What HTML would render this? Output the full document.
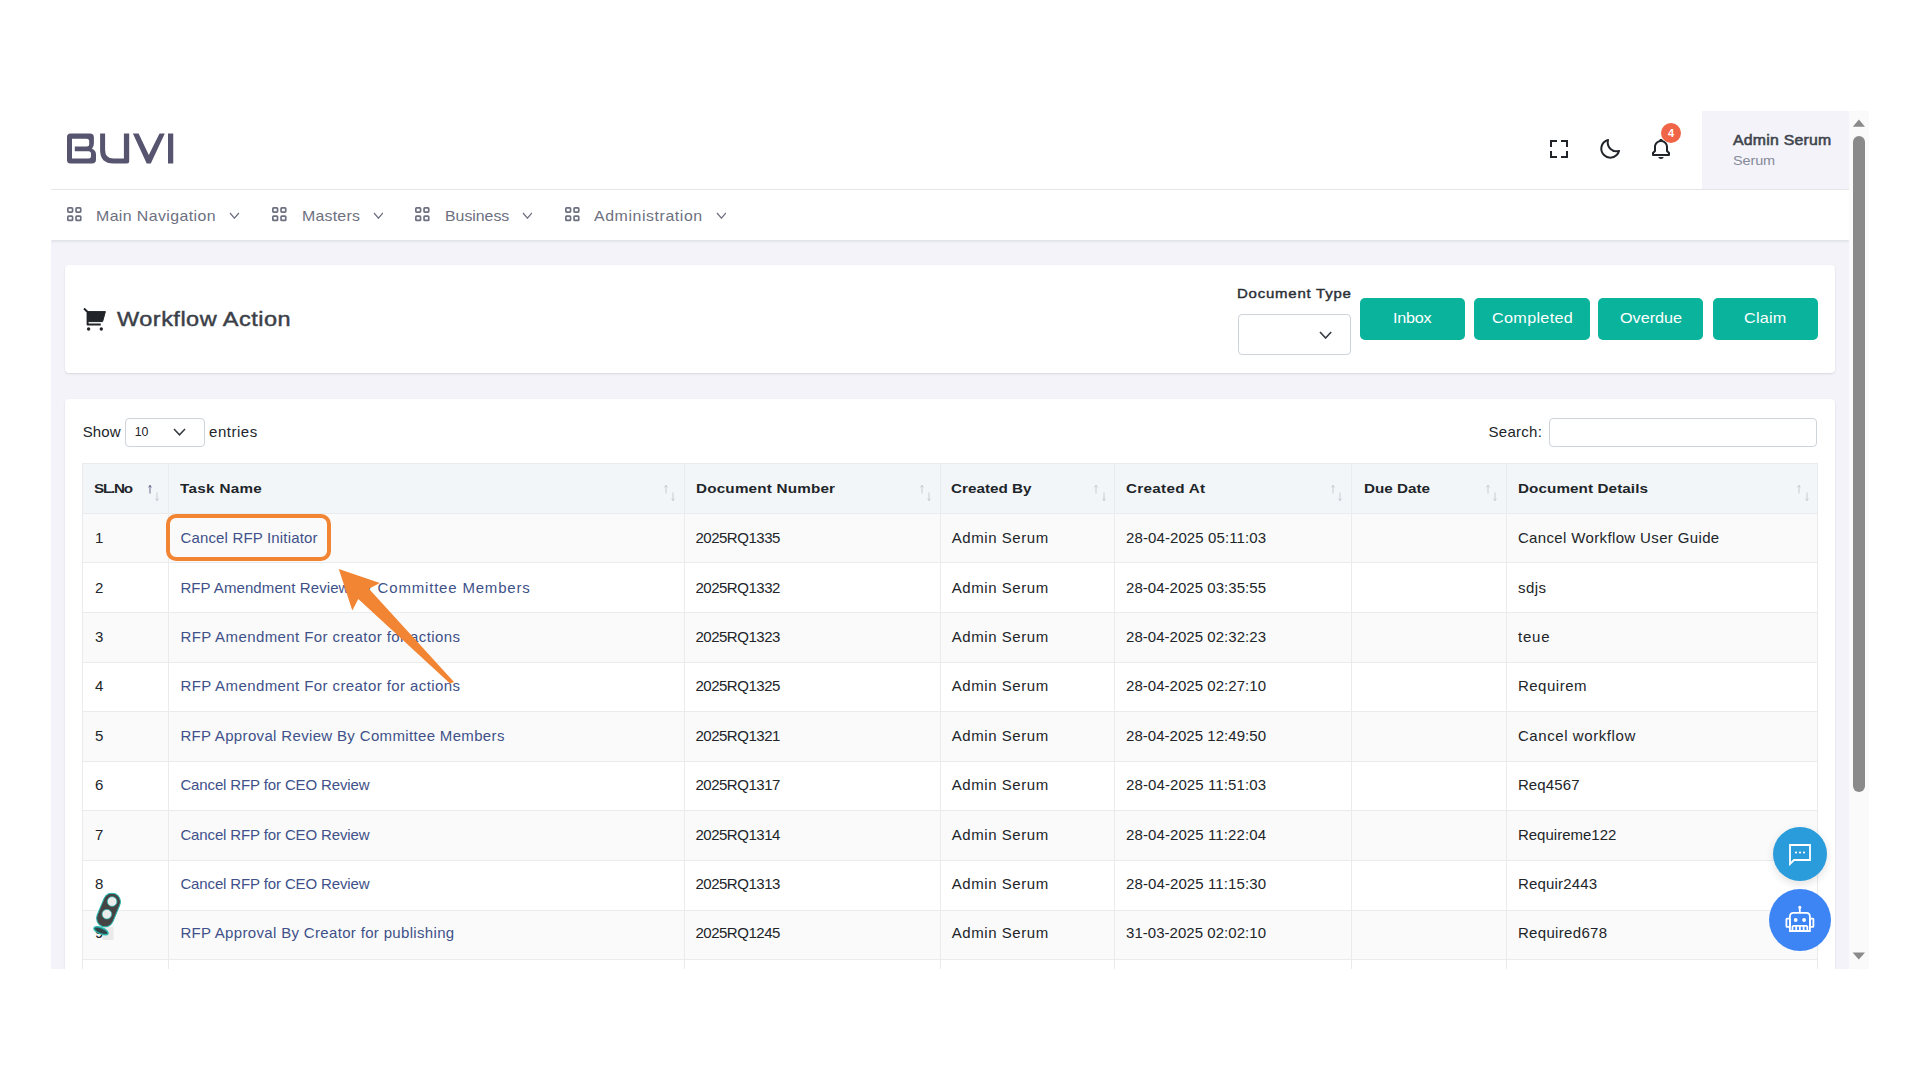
<!DOCTYPE html><html><head><meta charset="utf-8"><style>
*{box-sizing:border-box;margin:0;padding:0}
html,body{width:1920px;height:1080px;overflow:hidden;background:#fff;font-family:"Liberation Sans",sans-serif;color:#212529}
.a{position:absolute}
#frame{position:absolute;left:51px;top:111px;width:1798px;height:858px;overflow:hidden;background:#f3f3f9}
#in{position:absolute;left:-51px;top:-111px;width:1920px;height:1080px}
.t{position:absolute;white-space:nowrap;line-height:1}
.card{position:absolute;background:#fff;border-radius:4px;box-shadow:0 1px 2px rgba(56,65,74,.15)}
.btn{position:absolute;background:#0ab39c;border-radius:5px}
.hl{position:absolute;background:#e9ebec}
</style></head><body>
<div id="frame"><div id="in">
<div class="a" style="left:51px;top:111px;width:1798px;height:78px;background:#fff;"></div>
<div class="a" style="left:51px;top:189px;width:1798px;height:1px;background:#e9ebec;"></div>
<div class="a" style="left:1702px;top:111px;width:147px;height:78px;background:#f3f3f9;"></div>
<div class="a" style="left:51px;top:190px;width:1798px;height:50px;background:#fff;box-shadow:0 1px 3px rgba(15,34,58,.12)"></div>
<div class="card" style="left:65px;top:265px;width:1770px;height:108px"></div>
<div class="card" style="left:65px;top:399px;width:1770px;height:700px"></div>
<svg class="a" style="left:62px;top:126px" width="120" height="44" viewBox="0 0 120 44"><g fill="#57546f" fill-rule="evenodd"><path d="M8.5 7.5 H27.9 Q31.9 7.5 31.9 11.5 V17.5 Q31.9 20.5 30 22.8 Q34 24.5 34 28.5 V33.5 Q34 37.5 30 37.5 H8.5 Q5 37.5 5 34 V11 Q5 7.5 8.5 7.5 Z M10 12.8 H24.7 Q27.2 12.8 27.2 15.3 V18.1 Q27.2 20.6 24.7 20.6 H12.8 V25.3 H26.5 Q29 25.3 29 27.8 V30 Q29 32.5 26.5 32.5 H10 Z"/><path d="M38.1 7.5 H43.1 V24 Q43.1 32.5 51.5 32.5 H61.9 V7.5 H67.2 V35 Q67.2 37.5 64.7 37.5 H51.5 Q38.1 37.5 38.1 24 Z"/><polygon points="70.9,7.5 76.6,7.5 86.8,29 97.5,7.5 102.8,7.5 88.8,37.5 84.7,37.5"/><rect x="106" y="7.5" width="5.25" height="30"/></g></svg>
<svg class="a" style="left:1547px;top:136.6px" width="24" height="24" viewBox="0 0 24 24"><path fill="#212529" d="M5 5h5V3H3v7h2zm5 14H5v-5H3v7h7zm11-5h-2v5h-5v2h7zm-2-4h2V3h-7v2h5z"/></svg>
<svg class="a" style="left:1598px;top:137px" width="24" height="24" viewBox="0 0 24 24"><path fill="#212529" d="M20.742 13.045a8.088 8.088 0 0 1-2.077.271c-2.135 0-4.14-.83-5.646-2.336a8.025 8.025 0 0 1-2.064-7.723A1 1 0 0 0 9.73 2.034a10.014 10.014 0 0 0-4.489 2.582c-3.898 3.898-3.898 10.243 0 14.143a9.937 9.937 0 0 0 7.072 2.93 9.93 9.93 0 0 0 7.07-2.929 10.007 10.007 0 0 0 2.583-4.491 1.001 1.001 0 0 0-1.224-1.224zm-2.772 4.301a7.947 7.947 0 0 1-5.656 2.343 7.953 7.953 0 0 1-5.658-2.344c-3.118-3.119-3.118-8.195 0-11.314a7.923 7.923 0 0 1 2.06-1.483 10.027 10.027 0 0 0 2.89 7.848 9.972 9.972 0 0 0 7.848 2.891 8.036 8.036 0 0 1-1.484 2.059z"/></svg>
<svg class="a" style="left:1648.7px;top:137.2px" width="24" height="24" viewBox="0 0 24 24"><path fill="#212529" d="M19 13.586V10c0-3.217-2.185-5.927-5.145-6.742C13.562 2.52 12.846 2 12 2s-1.562.52-1.855 1.258C7.185 4.074 5 6.783 5 10v3.586l-1.707 1.707A.996.996 0 0 0 3 16v2a1 1 0 0 0 1 1h16a1 1 0 0 0 1-1v-2a.996.996 0 0 0-.293-.707L19 13.586zM19 17H5v-.586l1.707-1.707A.996.996 0 0 0 7 14v-4c0-2.757 2.243-5 5-5s5 2.243 5 5v4c0 .266.105.52.293.707L19 16.414V17zm-7 5a2.98 2.98 0 0 0 2.818-2H9.182A2.98 2.98 0 0 0 12 22z"/></svg>
<div class="a" style="left:1661px;top:122.5px;width:20px;height:20px;border-radius:50%;background:#f06548"></div>
<div class="t" style="left:1668.00px;top:128.19px;font-size:11px;color:#fff;font-weight:bold;letter-spacing:0.000px;">4</div>
<div class="t" style="left:1733.00px;top:133.11px;font-size:14.4px;color:#3f444d;font-weight:normal;letter-spacing:0.219px;transform:scaleX(1.1);transform-origin:0 0;-webkit-text-stroke:0.55px #3f444d">Admin Serum</div>
<div class="t" style="left:1733.00px;top:154.93px;font-size:12.6px;color:#878a99;font-weight:normal;letter-spacing:-0.103px;transform:scaleX(1.15);transform-origin:0 0;">Serum</div>
<svg class="a" style="left:66.7px;top:206.5px" width="16" height="15" viewBox="0 0 16 15"><g fill="none" stroke="#6d7080" stroke-width="1.7"><rect x="0.85" y="0.85" width="4.7" height="4.3" rx="0.8"/><rect x="9.05" y="0.85" width="4.7" height="4.3" rx="0.8"/><rect x="0.85" y="9.15" width="4.7" height="4.3" rx="0.8"/><rect x="9.05" y="9.15" width="4.7" height="4.3" rx="0.8"/></g></svg>
<div class="t" style="left:96.30px;top:208.30px;font-size:15px;color:#6d7080;font-weight:normal;letter-spacing:0.370px;transform:scaleX(1.06);transform-origin:0 0;">Main Navigation</div>
<svg class="a" style="left:229.0px;top:211.8px" width="10.9" height="7.2" viewBox="0 0 10.9 7.2"><path d="M1 1 L5.45 6.2 L9.9 1" fill="none" stroke="#6d7080" stroke-width="1.25"/></svg>
<svg class="a" style="left:271.6px;top:206.5px" width="16" height="15" viewBox="0 0 16 15"><g fill="none" stroke="#6d7080" stroke-width="1.7"><rect x="0.85" y="0.85" width="4.7" height="4.3" rx="0.8"/><rect x="9.05" y="0.85" width="4.7" height="4.3" rx="0.8"/><rect x="0.85" y="9.15" width="4.7" height="4.3" rx="0.8"/><rect x="9.05" y="9.15" width="4.7" height="4.3" rx="0.8"/></g></svg>
<div class="t" style="left:301.70px;top:208.30px;font-size:15px;color:#6d7080;font-weight:normal;letter-spacing:0.216px;transform:scaleX(1.06);transform-origin:0 0;">Masters</div>
<svg class="a" style="left:372.5px;top:211.8px" width="10.9" height="7.2" viewBox="0 0 10.9 7.2"><path d="M1 1 L5.45 6.2 L9.9 1" fill="none" stroke="#6d7080" stroke-width="1.25"/></svg>
<svg class="a" style="left:415px;top:206.5px" width="16" height="15" viewBox="0 0 16 15"><g fill="none" stroke="#6d7080" stroke-width="1.7"><rect x="0.85" y="0.85" width="4.7" height="4.3" rx="0.8"/><rect x="9.05" y="0.85" width="4.7" height="4.3" rx="0.8"/><rect x="0.85" y="9.15" width="4.7" height="4.3" rx="0.8"/><rect x="9.05" y="9.15" width="4.7" height="4.3" rx="0.8"/></g></svg>
<div class="t" style="left:445.00px;top:208.30px;font-size:15px;color:#6d7080;font-weight:normal;letter-spacing:-0.034px;transform:scaleX(1.06);transform-origin:0 0;">Business</div>
<svg class="a" style="left:521.5px;top:211.8px" width="10.9" height="7.2" viewBox="0 0 10.9 7.2"><path d="M1 1 L5.45 6.2 L9.9 1" fill="none" stroke="#6d7080" stroke-width="1.25"/></svg>
<svg class="a" style="left:564.5px;top:206.5px" width="16" height="15" viewBox="0 0 16 15"><g fill="none" stroke="#6d7080" stroke-width="1.7"><rect x="0.85" y="0.85" width="4.7" height="4.3" rx="0.8"/><rect x="9.05" y="0.85" width="4.7" height="4.3" rx="0.8"/><rect x="0.85" y="9.15" width="4.7" height="4.3" rx="0.8"/><rect x="9.05" y="9.15" width="4.7" height="4.3" rx="0.8"/></g></svg>
<div class="t" style="left:594.30px;top:208.30px;font-size:15px;color:#6d7080;font-weight:normal;letter-spacing:0.542px;transform:scaleX(1.06);transform-origin:0 0;">Administration</div>
<svg class="a" style="left:715.5px;top:211.8px" width="10.9" height="7.2" viewBox="0 0 10.9 7.2"><path d="M1 1 L5.45 6.2 L9.9 1" fill="none" stroke="#6d7080" stroke-width="1.25"/></svg>
<svg class="a" style="left:80px;top:305px" width="30" height="28" viewBox="80 305 30 28"><g fill="#212529" stroke="#212529" stroke-linejoin="round"><path d="M84 308.6 L87.6 312 L87.6 324.6 L100.8 324.6" fill="none" stroke-width="2"/><polygon points="87.6,311.6 105.4,311.6 102.6,321.6 88.5,321.6" stroke-width="1"/><circle cx="88.6" cy="329" r="1.7" stroke="none"/><circle cx="101.3" cy="329" r="1.7" stroke="none"/></g></svg>
<div class="t" style="left:117.20px;top:307.92px;font-size:21px;color:#3b4048;font-weight:normal;letter-spacing:0.429px;transform:scaleX(1.12);transform-origin:0 0;-webkit-text-stroke:0.45px #3b4048">Workflow Action</div>
<div class="t" style="left:1237.20px;top:286.66px;font-size:13.4px;color:#2b2f36;font-weight:normal;letter-spacing:0.682px;transform:scaleX(1.12);transform-origin:0 0;-webkit-text-stroke:0.4px #2b2f36">Document Type</div>
<div class="a" style="left:1237.5px;top:313.5px;width:113px;height:41px;border:1px solid #ced4da;border-radius:4px;background:#fff"></div>
<svg class="a" style="left:1318.7px;top:330.5px" width="13.2" height="8" viewBox="0 0 13.2 8"><path d="M1 1 L6.6 7 L12.2 1" fill="none" stroke="#343a40" stroke-width="1.6"/></svg>
<div class="btn" style="left:1360.2px;top:298.2px;width:105.2px;height:41.4px"></div>
<div class="t" style="left:1393.40px;top:310.30px;font-size:15px;color:#fff;font-weight:normal;letter-spacing:-0.234px;transform:scaleX(1.08);transform-origin:0 0;">Inbox</div>
<div class="btn" style="left:1474px;top:298.2px;width:115.5px;height:41.4px"></div>
<div class="t" style="left:1491.50px;top:310.30px;font-size:15px;color:#fff;font-weight:normal;letter-spacing:0.286px;transform:scaleX(1.08);transform-origin:0 0;">Completed</div>
<div class="btn" style="left:1598px;top:298.2px;width:105.3px;height:41.4px"></div>
<div class="t" style="left:1620.00px;top:310.30px;font-size:15px;color:#fff;font-weight:normal;letter-spacing:-0.020px;transform:scaleX(1.08);transform-origin:0 0;">Overdue</div>
<div class="btn" style="left:1713.2px;top:298.2px;width:104.9px;height:41.4px"></div>
<div class="t" style="left:1744.20px;top:310.30px;font-size:15px;color:#fff;font-weight:normal;letter-spacing:0.210px;transform:scaleX(1.08);transform-origin:0 0;">Claim</div>
<div class="t" style="left:82.70px;top:423.90px;font-size:15px;color:#212529;font-weight:normal;letter-spacing:0.142px;">Show</div>
<div class="a" style="left:125.4px;top:417.5px;width:79.2px;height:29.5px;border:1px solid #ced4da;border-radius:4px;background:#fff"></div>
<div class="t" style="left:134.80px;top:426.10px;font-size:12.4px;color:#212529;font-weight:normal;letter-spacing:-0.300px;">10</div>
<svg class="a" style="left:172.8px;top:428.4px" width="13" height="7.8" viewBox="0 0 13 7.8"><path d="M1 1 L6.5 6.8 L12 1" fill="none" stroke="#343a40" stroke-width="1.5"/></svg>
<div class="t" style="left:209.00px;top:423.90px;font-size:15px;color:#212529;font-weight:normal;letter-spacing:0.533px;">entries</div>
<div class="t" style="left:1488.60px;top:424.20px;font-size:15px;color:#212529;font-weight:normal;letter-spacing:0.254px;">Search:</div>
<div class="a" style="left:1549px;top:417.5px;width:268.3px;height:29.5px;border:1px solid #ced4da;border-radius:4px;background:#fff"></div>
<div class="a" style="left:82.2px;top:463.3px;width:1735.3999999999999px;height:49.99999999999994px;background:#f3f6f9;"></div>
<div class="a" style="left:82.2px;top:513.3px;width:1735.3999999999999px;height:49.60000000000002px;background:#fafafa;"></div>
<div class="a" style="left:82.2px;top:562.9px;width:1735.3999999999999px;height:49.60000000000002px;background:#ffffff;"></div>
<div class="a" style="left:82.2px;top:612.5px;width:1735.3999999999999px;height:49.60000000000002px;background:#fafafa;"></div>
<div class="a" style="left:82.2px;top:662.0999999999999px;width:1735.3999999999999px;height:49.60000000000002px;background:#ffffff;"></div>
<div class="a" style="left:82.2px;top:711.6999999999999px;width:1735.3999999999999px;height:49.60000000000002px;background:#fafafa;"></div>
<div class="a" style="left:82.2px;top:761.3px;width:1735.3999999999999px;height:49.60000000000002px;background:#ffffff;"></div>
<div class="a" style="left:82.2px;top:810.9px;width:1735.3999999999999px;height:49.60000000000002px;background:#fafafa;"></div>
<div class="a" style="left:82.2px;top:860.5px;width:1735.3999999999999px;height:49.60000000000002px;background:#ffffff;"></div>
<div class="a" style="left:82.2px;top:910.0999999999999px;width:1735.3999999999999px;height:49.60000000000002px;background:#fafafa;"></div>
<div class="a" style="left:82.2px;top:959.7px;width:1735.3999999999999px;height:49.60000000000002px;background:#ffffff;"></div>
<div class="hl" style="left:82.2px;top:463.3px;width:1735.4px;height:1px"></div>
<div class="hl" style="left:82.2px;top:512.8px;width:1735.4px;height:1px"></div>
<div class="hl" style="left:82.2px;top:562.4px;width:1735.4px;height:1px"></div>
<div class="hl" style="left:82.2px;top:612.0px;width:1735.4px;height:1px"></div>
<div class="hl" style="left:82.2px;top:661.6px;width:1735.4px;height:1px"></div>
<div class="hl" style="left:82.2px;top:711.2px;width:1735.4px;height:1px"></div>
<div class="hl" style="left:82.2px;top:760.8px;width:1735.4px;height:1px"></div>
<div class="hl" style="left:82.2px;top:810.4px;width:1735.4px;height:1px"></div>
<div class="hl" style="left:82.2px;top:860.0px;width:1735.4px;height:1px"></div>
<div class="hl" style="left:82.2px;top:909.6px;width:1735.4px;height:1px"></div>
<div class="hl" style="left:82.2px;top:959.2px;width:1735.4px;height:1px"></div>
<div class="hl" style="left:82.2px;top:1008.8px;width:1735.4px;height:1px"></div>
<div class="hl" style="left:81.7px;top:463.3px;width:1px;height:600px"></div>
<div class="hl" style="left:167.6px;top:463.3px;width:1px;height:600px"></div>
<div class="hl" style="left:683.9px;top:463.3px;width:1px;height:600px"></div>
<div class="hl" style="left:939.9px;top:463.3px;width:1px;height:600px"></div>
<div class="hl" style="left:1114.2px;top:463.3px;width:1px;height:600px"></div>
<div class="hl" style="left:1351.0px;top:463.3px;width:1px;height:600px"></div>
<div class="hl" style="left:1505.9px;top:463.3px;width:1px;height:600px"></div>
<div class="hl" style="left:1817.1px;top:463.3px;width:1px;height:600px"></div>
<div class="t" style="left:94.40px;top:481.99px;font-size:13.6px;color:#212529;font-weight:bold;letter-spacing:-1.121px;transform:scaleX(1.12);transform-origin:0 0;">SL.No</div>
<div class="t" style="left:180.30px;top:481.99px;font-size:13.6px;color:#212529;font-weight:bold;letter-spacing:0.281px;transform:scaleX(1.12);transform-origin:0 0;">Task Name</div>
<div class="t" style="left:695.70px;top:481.99px;font-size:13.6px;color:#212529;font-weight:bold;letter-spacing:0.182px;transform:scaleX(1.12);transform-origin:0 0;">Document Number</div>
<div class="t" style="left:951.25px;top:481.99px;font-size:13.6px;color:#212529;font-weight:bold;letter-spacing:0.007px;transform:scaleX(1.12);transform-origin:0 0;">Created By</div>
<div class="t" style="left:1126.00px;top:481.99px;font-size:13.6px;color:#212529;font-weight:bold;letter-spacing:0.271px;transform:scaleX(1.12);transform-origin:0 0;">Created At</div>
<div class="t" style="left:1363.60px;top:481.99px;font-size:13.6px;color:#212529;font-weight:bold;letter-spacing:0.009px;transform:scaleX(1.12);transform-origin:0 0;">Due Date</div>
<div class="t" style="left:1518.00px;top:481.99px;font-size:13.6px;color:#212529;font-weight:bold;letter-spacing:0.081px;transform:scaleX(1.12);transform-origin:0 0;">Document Details</div>
<svg class="a" style="left:146.8px;top:484px" width="6" height="10" viewBox="0 0 6 10"><path d="M3 9.5 V1.8 M1.7 3.4 L3 1.2 L4.3 3.4" fill="none" stroke="#5a5f80" stroke-width="0.9"/></svg>
<svg class="a" style="left:154.0px;top:491.5px" width="6" height="10" viewBox="0 0 6 10"><path d="M3 0.5 V8.2 M1.7 6.6 L3 8.8 L4.3 6.6" fill="none" stroke="#c4c7cc" stroke-width="0.9"/></svg>
<svg class="a" style="left:663.1px;top:484px" width="6" height="10" viewBox="0 0 6 10"><path d="M3 9.5 V1.8 M1.7 3.4 L3 1.2 L4.3 3.4" fill="none" stroke="#c4c7cc" stroke-width="0.9"/></svg>
<svg class="a" style="left:670.3px;top:491.5px" width="6" height="10" viewBox="0 0 6 10"><path d="M3 0.5 V8.2 M1.7 6.6 L3 8.8 L4.3 6.6" fill="none" stroke="#c4c7cc" stroke-width="0.9"/></svg>
<svg class="a" style="left:919.1px;top:484px" width="6" height="10" viewBox="0 0 6 10"><path d="M3 9.5 V1.8 M1.7 3.4 L3 1.2 L4.3 3.4" fill="none" stroke="#c4c7cc" stroke-width="0.9"/></svg>
<svg class="a" style="left:926.3px;top:491.5px" width="6" height="10" viewBox="0 0 6 10"><path d="M3 0.5 V8.2 M1.7 6.6 L3 8.8 L4.3 6.6" fill="none" stroke="#c4c7cc" stroke-width="0.9"/></svg>
<svg class="a" style="left:1093.4px;top:484px" width="6" height="10" viewBox="0 0 6 10"><path d="M3 9.5 V1.8 M1.7 3.4 L3 1.2 L4.3 3.4" fill="none" stroke="#c4c7cc" stroke-width="0.9"/></svg>
<svg class="a" style="left:1100.6px;top:491.5px" width="6" height="10" viewBox="0 0 6 10"><path d="M3 0.5 V8.2 M1.7 6.6 L3 8.8 L4.3 6.6" fill="none" stroke="#c4c7cc" stroke-width="0.9"/></svg>
<svg class="a" style="left:1330.2px;top:484px" width="6" height="10" viewBox="0 0 6 10"><path d="M3 9.5 V1.8 M1.7 3.4 L3 1.2 L4.3 3.4" fill="none" stroke="#c4c7cc" stroke-width="0.9"/></svg>
<svg class="a" style="left:1337.4px;top:491.5px" width="6" height="10" viewBox="0 0 6 10"><path d="M3 0.5 V8.2 M1.7 6.6 L3 8.8 L4.3 6.6" fill="none" stroke="#c4c7cc" stroke-width="0.9"/></svg>
<svg class="a" style="left:1485.1px;top:484px" width="6" height="10" viewBox="0 0 6 10"><path d="M3 9.5 V1.8 M1.7 3.4 L3 1.2 L4.3 3.4" fill="none" stroke="#c4c7cc" stroke-width="0.9"/></svg>
<svg class="a" style="left:1492.3px;top:491.5px" width="6" height="10" viewBox="0 0 6 10"><path d="M3 0.5 V8.2 M1.7 6.6 L3 8.8 L4.3 6.6" fill="none" stroke="#c4c7cc" stroke-width="0.9"/></svg>
<svg class="a" style="left:1796.3px;top:484px" width="6" height="10" viewBox="0 0 6 10"><path d="M3 9.5 V1.8 M1.7 3.4 L3 1.2 L4.3 3.4" fill="none" stroke="#c4c7cc" stroke-width="0.9"/></svg>
<svg class="a" style="left:1803.5px;top:491.5px" width="6" height="10" viewBox="0 0 6 10"><path d="M3 0.5 V8.2 M1.7 6.6 L3 8.8 L4.3 6.6" fill="none" stroke="#c4c7cc" stroke-width="0.9"/></svg>
<div class="t" style="left:95.00px;top:530.20px;font-size:15px;color:#212529;font-weight:normal;letter-spacing:0.000px;">1</div>
<div class="t" style="left:180.40px;top:530.20px;font-size:15px;color:#405189;font-weight:normal;letter-spacing:0.166px;">Cancel RFP Initiator</div>
<div class="t" style="left:695.40px;top:530.20px;font-size:15px;color:#212529;font-weight:normal;letter-spacing:-0.472px;">2025RQ1335</div>
<div class="t" style="left:951.70px;top:530.20px;font-size:15px;color:#212529;font-weight:normal;letter-spacing:0.570px;">Admin Serum</div>
<div class="t" style="left:1126.00px;top:530.20px;font-size:15px;color:#212529;font-weight:normal;letter-spacing:0.103px;">28-04-2025 05:11:03</div>
<div class="t" style="left:1517.90px;top:530.20px;font-size:15px;color:#212529;font-weight:normal;letter-spacing:0.360px;">Cancel Workflow User Guide</div>
<div class="t" style="left:95.00px;top:579.60px;font-size:15px;color:#212529;font-weight:normal;letter-spacing:0.000px;">2</div>
<div class="t" style="left:180.40px;top:579.60px;font-size:15px;color:#405189;font-weight:normal;letter-spacing:0.091px;">RFP Amendment Review By</div>
<div class="t" style="left:377.60px;top:579.60px;font-size:15px;color:#405189;font-weight:normal;letter-spacing:0.812px;">Committee Members</div>
<div class="t" style="left:695.40px;top:579.60px;font-size:15px;color:#212529;font-weight:normal;letter-spacing:-0.472px;">2025RQ1332</div>
<div class="t" style="left:951.70px;top:579.60px;font-size:15px;color:#212529;font-weight:normal;letter-spacing:0.570px;">Admin Serum</div>
<div class="t" style="left:1126.00px;top:579.60px;font-size:15px;color:#212529;font-weight:normal;letter-spacing:0.040px;">28-04-2025 03:35:55</div>
<div class="t" style="left:1517.90px;top:579.60px;font-size:15px;color:#212529;font-weight:normal;letter-spacing:0.500px;">sdjs</div>
<div class="t" style="left:95.00px;top:629.00px;font-size:15px;color:#212529;font-weight:normal;letter-spacing:0.000px;">3</div>
<div class="t" style="left:180.40px;top:629.00px;font-size:15px;color:#405189;font-weight:normal;letter-spacing:0.410px;">RFP Amendment For creator for actions</div>
<div class="t" style="left:695.40px;top:629.00px;font-size:15px;color:#212529;font-weight:normal;letter-spacing:-0.472px;">2025RQ1323</div>
<div class="t" style="left:951.70px;top:629.00px;font-size:15px;color:#212529;font-weight:normal;letter-spacing:0.570px;">Admin Serum</div>
<div class="t" style="left:1126.00px;top:629.00px;font-size:15px;color:#212529;font-weight:normal;letter-spacing:0.040px;">28-04-2025 02:32:23</div>
<div class="t" style="left:1517.90px;top:629.00px;font-size:15px;color:#212529;font-weight:normal;letter-spacing:0.842px;">teue</div>
<div class="t" style="left:95.00px;top:678.40px;font-size:15px;color:#212529;font-weight:normal;letter-spacing:0.000px;">4</div>
<div class="t" style="left:180.40px;top:678.40px;font-size:15px;color:#405189;font-weight:normal;letter-spacing:0.410px;">RFP Amendment For creator for actions</div>
<div class="t" style="left:695.40px;top:678.40px;font-size:15px;color:#212529;font-weight:normal;letter-spacing:-0.472px;">2025RQ1325</div>
<div class="t" style="left:951.70px;top:678.40px;font-size:15px;color:#212529;font-weight:normal;letter-spacing:0.570px;">Admin Serum</div>
<div class="t" style="left:1126.00px;top:678.40px;font-size:15px;color:#212529;font-weight:normal;letter-spacing:0.040px;">28-04-2025 02:27:10</div>
<div class="t" style="left:1517.90px;top:678.40px;font-size:15px;color:#212529;font-weight:normal;letter-spacing:0.511px;">Requirem</div>
<div class="t" style="left:95.00px;top:727.80px;font-size:15px;color:#212529;font-weight:normal;letter-spacing:0.000px;">5</div>
<div class="t" style="left:180.40px;top:727.80px;font-size:15px;color:#405189;font-weight:normal;letter-spacing:0.342px;">RFP Approval Review By Committee Members</div>
<div class="t" style="left:695.40px;top:727.80px;font-size:15px;color:#212529;font-weight:normal;letter-spacing:-0.472px;">2025RQ1321</div>
<div class="t" style="left:951.70px;top:727.80px;font-size:15px;color:#212529;font-weight:normal;letter-spacing:0.570px;">Admin Serum</div>
<div class="t" style="left:1126.00px;top:727.80px;font-size:15px;color:#212529;font-weight:normal;letter-spacing:0.040px;">28-04-2025 12:49:50</div>
<div class="t" style="left:1517.90px;top:727.80px;font-size:15px;color:#212529;font-weight:normal;letter-spacing:0.580px;">Cancel workflow</div>
<div class="t" style="left:95.00px;top:777.20px;font-size:15px;color:#212529;font-weight:normal;letter-spacing:0.000px;">6</div>
<div class="t" style="left:180.40px;top:777.20px;font-size:15px;color:#405189;font-weight:normal;letter-spacing:-0.129px;">Cancel RFP for CEO Review</div>
<div class="t" style="left:695.40px;top:777.20px;font-size:15px;color:#212529;font-weight:normal;letter-spacing:-0.472px;">2025RQ1317</div>
<div class="t" style="left:951.70px;top:777.20px;font-size:15px;color:#212529;font-weight:normal;letter-spacing:0.570px;">Admin Serum</div>
<div class="t" style="left:1126.00px;top:777.20px;font-size:15px;color:#212529;font-weight:normal;letter-spacing:0.103px;">28-04-2025 11:51:03</div>
<div class="t" style="left:1517.90px;top:777.20px;font-size:15px;color:#212529;font-weight:normal;letter-spacing:0.117px;">Req4567</div>
<div class="t" style="left:95.00px;top:826.60px;font-size:15px;color:#212529;font-weight:normal;letter-spacing:0.000px;">7</div>
<div class="t" style="left:180.40px;top:826.60px;font-size:15px;color:#405189;font-weight:normal;letter-spacing:-0.129px;">Cancel RFP for CEO Review</div>
<div class="t" style="left:695.40px;top:826.60px;font-size:15px;color:#212529;font-weight:normal;letter-spacing:-0.472px;">2025RQ1314</div>
<div class="t" style="left:951.70px;top:826.60px;font-size:15px;color:#212529;font-weight:normal;letter-spacing:0.570px;">Admin Serum</div>
<div class="t" style="left:1126.00px;top:826.60px;font-size:15px;color:#212529;font-weight:normal;letter-spacing:0.103px;">28-04-2025 11:22:04</div>
<div class="t" style="left:1517.90px;top:826.60px;font-size:15px;color:#212529;font-weight:normal;letter-spacing:0.009px;">Requireme122</div>
<div class="t" style="left:95.00px;top:876.00px;font-size:15px;color:#212529;font-weight:normal;letter-spacing:0.000px;">8</div>
<div class="t" style="left:180.40px;top:876.00px;font-size:15px;color:#405189;font-weight:normal;letter-spacing:-0.129px;">Cancel RFP for CEO Review</div>
<div class="t" style="left:695.40px;top:876.00px;font-size:15px;color:#212529;font-weight:normal;letter-spacing:-0.472px;">2025RQ1313</div>
<div class="t" style="left:951.70px;top:876.00px;font-size:15px;color:#212529;font-weight:normal;letter-spacing:0.570px;">Admin Serum</div>
<div class="t" style="left:1126.00px;top:876.00px;font-size:15px;color:#212529;font-weight:normal;letter-spacing:0.103px;">28-04-2025 11:15:30</div>
<div class="t" style="left:1517.90px;top:876.00px;font-size:15px;color:#212529;font-weight:normal;letter-spacing:0.183px;">Requir2443</div>
<div class="t" style="left:95.00px;top:925.40px;font-size:15px;color:#212529;font-weight:normal;letter-spacing:0.000px;">9</div>
<div class="t" style="left:180.40px;top:925.40px;font-size:15px;color:#405189;font-weight:normal;letter-spacing:0.332px;">RFP Approval By Creator for publishing</div>
<div class="t" style="left:695.40px;top:925.40px;font-size:15px;color:#212529;font-weight:normal;letter-spacing:-0.472px;">2025RQ1245</div>
<div class="t" style="left:951.70px;top:925.40px;font-size:15px;color:#212529;font-weight:normal;letter-spacing:0.570px;">Admin Serum</div>
<div class="t" style="left:1126.00px;top:925.40px;font-size:15px;color:#212529;font-weight:normal;letter-spacing:0.040px;">31-03-2025 02:02:10</div>
<div class="t" style="left:1517.90px;top:925.40px;font-size:15px;color:#212529;font-weight:normal;letter-spacing:0.333px;">Required678</div>
</div></div>
<div class="a" style="left:1849px;top:111px;width:20px;height:858px;background:#fafafa;"></div>
<svg class="a" style="left:1849px;top:111px" width="20" height="858" viewBox="0 0 20 858"><polygon points="3.8,15.7 16,15.7 9.9,8.6" fill="#8a8a8a"/><rect x="4" y="25" width="12" height="656" rx="6" fill="#8a8a8a"/><polygon points="3.6,841.6 16,841.6 9.8,848.6" fill="#8a8a8a"/></svg>
<div class="a" style="left:1772.7px;top:826.9px;width:54px;height:54px;border-radius:50%;background:#2a9cdb;box-shadow:0 3px 8px rgba(0,0,0,.12)"></div>
<svg class="a" style="left:1787px;top:842px" width="26" height="24" viewBox="0 0 26 24"><path d="M3 3 H23 V18 H7 L3 22 Z" fill="none" stroke="#fff" stroke-width="1.8" stroke-linejoin="miter"/><circle cx="9" cy="10.5" r="1.1" fill="#fff"/><circle cx="13" cy="10.5" r="1.1" fill="#fff"/><circle cx="17" cy="10.5" r="1.1" fill="#fff"/></svg>
<div class="a" style="left:1768.6px;top:889.4px;width:62px;height:62px;border-radius:50%;background:#3d85f5"></div>
<svg class="a" style="left:1780px;top:900px" width="40" height="40" viewBox="1780 900 40 40"><g fill="none" stroke="#fff" stroke-width="1.8"><line x1="1799.8" y1="908" x2="1799.8" y2="912.5"/><path d="M1789.9 931 V916.5 Q1789.9 912.9 1793.5 912.9 H1806.3 Q1809.9 912.9 1809.9 916.5 V931 Z"/><rect x="1786.4" y="918.6" width="3.5" height="8.2" rx="0.6"/><rect x="1809.9" y="918.6" width="3.5" height="8.2" rx="0.6"/><path d="M1792.5 925.9 H1807.3 M1796.2 925.9 V931 M1799.9 925.9 V931 M1803.6 925.9 V931 M1792.5 925.9 V931 M1807.3 925.9 V931"/></g><circle cx="1799.8" cy="907.3" r="1.5" fill="#fff"/><circle cx="1795.7" cy="920" r="1.9" fill="#fff"/><circle cx="1804.1" cy="920" r="1.9" fill="#fff"/></svg>
<svg class="a" style="left:85px;top:885px" width="50" height="60" viewBox="0 0 50 60"><rect x="17.5" y="42" width="11" height="13" fill="#e6e6e6" opacity="0.85"/><ellipse cx="16" cy="45.8" rx="7.6" ry="3" transform="rotate(22 16 45.8)" fill="#31464a" stroke="#2bb7b0" stroke-width="1.4"/><g transform="rotate(22.5 23.5 25)"><rect x="15" y="7.5" width="17" height="35" rx="8.5" fill="#454344" stroke="#2bb7b0" stroke-width="1"/><circle cx="23.6" cy="15.8" r="4.8" fill="#ececec" stroke="#2bb7b0" stroke-width="0.7"/><circle cx="23.6" cy="29.5" r="4.8" fill="#ececec" stroke="#2bb7b0" stroke-width="0.7"/></g></svg>
<div class="a" style="left:166.1px;top:513.9px;width:164.6px;height:47.2px;border:4.5px solid #f28534;border-radius:10px"></div>
<svg class="a" style="left:0;top:0" width="600" height="800" viewBox="0 0 600 800"><polygon points="338.8,569.1 379.9,583.1 368.9,588.8 454,682 450,683.5 358.3,598.9 352.3,610.6" fill="#f28534"/></svg>
</body></html>
